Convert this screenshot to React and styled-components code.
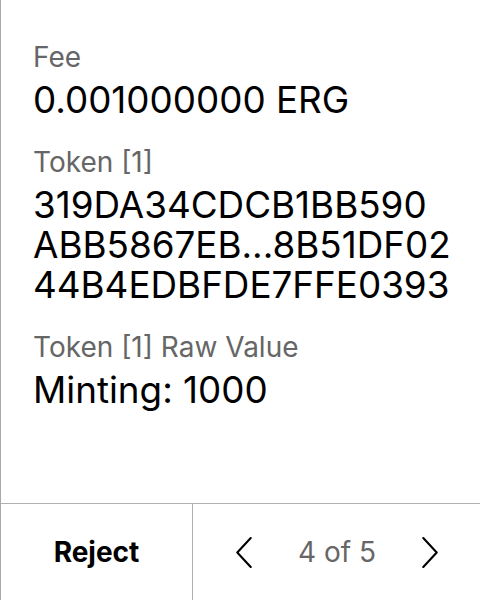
import React from 'react'
import styled, { createGlobalStyle } from 'styled-components'

const GlobalStyle = createGlobalStyle`
  html, body {
    margin: 0;
    padding: 0;
    background: #fff;
  }
  body {
    font-family: Inter, "Noto Sans", sans-serif;
  }
`;

const fields = [
  { label: 'Fee', value: ['0.001000000 ERG'] },
  { label: 'Token [1]', value: ['319DA34CDCB1BB590', 'ABB5867EB...8B51DF02', '44B4EDBFDE7FFE0393'] },
  { label: 'Token [1] Raw Value', value: ['Minting: 1000'] },
];

function Chevron({ dir }) {
  const points = dir === 'left' ? '14,1 1,15 14,29' : '1,1 14,15 1,29';
  return (
    <svg width="16" height="31" viewBox="0 0 15 30" fill="none">
      <polyline points={points} stroke="#000" strokeWidth="2" strokeLinecap="round" strokeLinejoin="round" />
    </svg>
  );
}

function App() {
  return (
    <>
      <GlobalStyle />
      <Screen>
        <Details>
          {fields.map((f) => (
            <Field key={f.label}>
              <Label>{f.label}</Label>
              <Value>
                {f.value.map((line, i) => (
                  <React.Fragment key={line}>
                    {i > 0 && <br />}
                    {line}
                  </React.Fragment>
                ))}
              </Value>
            </Field>
          ))}
        </Details>
        <Footer>
          <RejectButton>Reject</RejectButton>
          <Pager>
            <NavButton aria-label="previous"><Chevron dir="left" /></NavButton>
            <PageCount>4 of 5</PageCount>
            <NavButton aria-label="next"><Chevron dir="right" /></NavButton>
          </Pager>
        </Footer>
      </Screen>
    </>
  );
}

export default App

const Screen = styled.div`
  width: 480px;
  height: 600px;
  box-sizing: border-box;
  border-left: 1px solid #aaaaaa;
  display: flex;
  flex-direction: column;
`;

const Details = styled.div`
  flex: 1;
  padding: 40px 0 0 32px;
  display: flex;
  flex-direction: column;
  gap: 25px;
`;

const Field = styled.div`
  display: flex;
  flex-direction: column;
  gap: 6px;
`;

const Label = styled.div`
  font-size: 28px;
  line-height: 34px;
  color: #666;
`;

const Value = styled.div`
  font-size: 36.8px;
  line-height: 40px;
  color: #000;
`;

const Footer = styled.div`
  height: 96px;
  border-top: 1px solid #b0b0b0;
  display: flex;
`;

const RejectButton = styled.div`
  width: 191px;
  border-right: 1px solid #b0b0b0;
  display: flex;
  align-items: center;
  justify-content: center;
  font-size: 28px;
  font-weight: 700;
  color: #000;
`;

const Pager = styled.div`
  flex: 1;
  display: flex;
  align-items: center;
  justify-content: space-between;
  padding: 0 42px 0 43px;
`;

const NavButton = styled.div`
  display: flex;
  align-items: center;
`;

const PageCount = styled.div`
  font-size: 28px;
  color: #666;
`;
